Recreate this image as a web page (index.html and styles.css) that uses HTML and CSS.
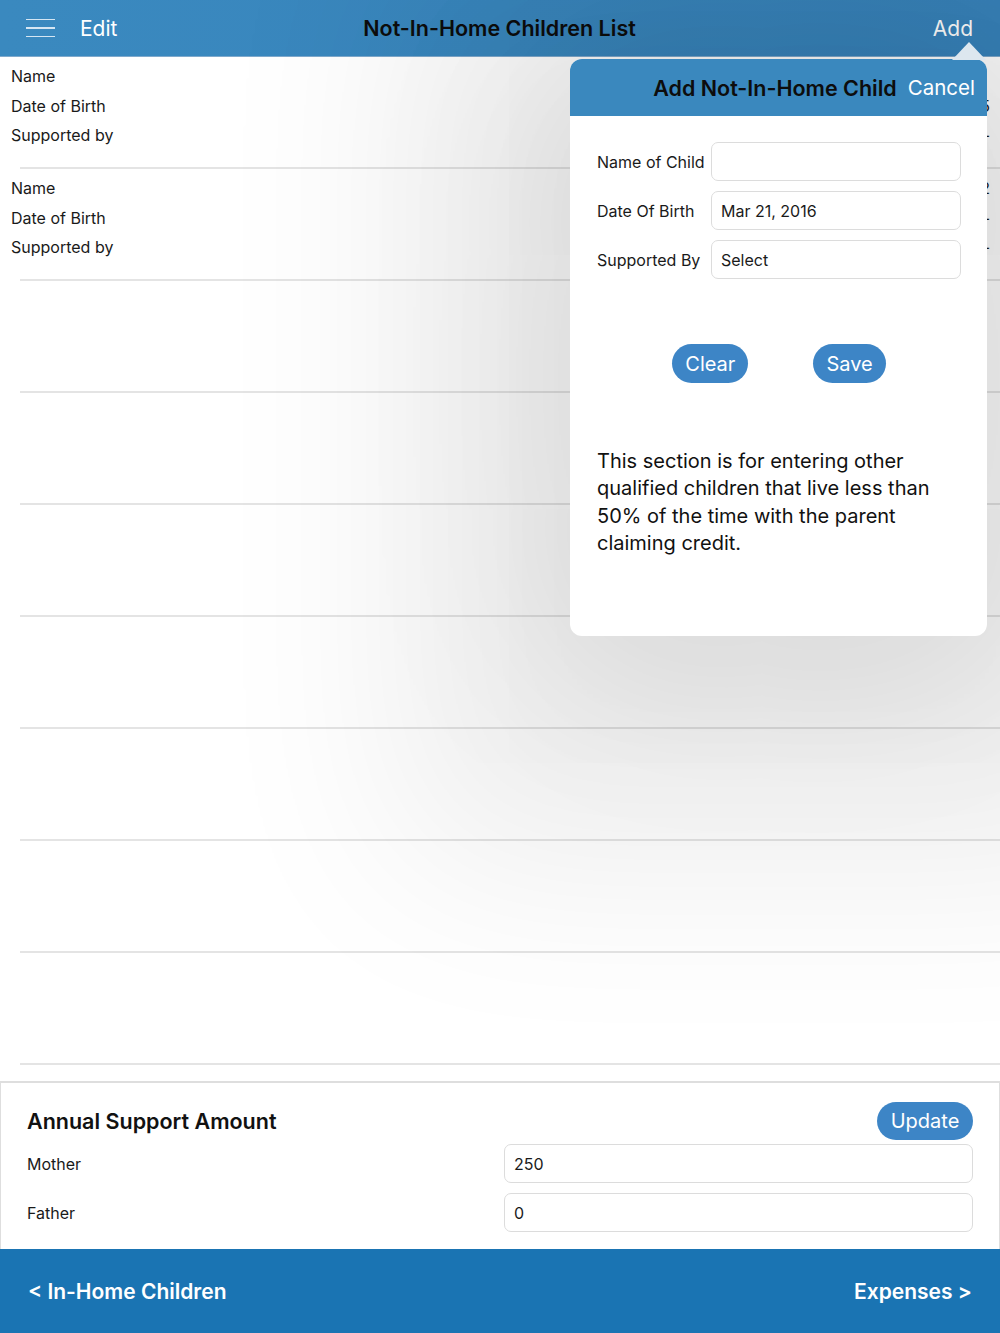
FILE: index.html
```
<!DOCTYPE html>
<html lang="en">

<head>
  <meta charset="UTF-8" />
  <meta name="viewport" content="width=device-width, initial-scale=1.0" />
  <title>Not-In-Home Children List</title>
  <link rel="stylesheet" href="styles.css">
</head>

<body>
  <div class="page">
    <!-- 顶部导航 -->
    <div class="nav">
      <div class="nav-side">
        <span class="menu"><i></i><i></i><i></i></span>
        <span class="nav-btn">Edit</span>
      </div>
      <div class="nav-title">Not-In-Home Children List</div>
      <div class="nav-side right">
        <span class="nav-btn">Add</span>
      </div>
    </div>

    <!-- 孩子列表 -->
    <ul class="list">
      <li class="row">
        <div class="labels">
          <span>Name</span>
          <span>Date of Birth</span>
          <span>Supported by</span>
        </div>
        <div class="values">
          <span>&nbsp;</span>
          <span>Jan 5, 2015</span>
          <span>-</span>
        </div>
      </li>
      <li class="row">
        <div class="labels">
          <span>Name</span>
          <span>Date of Birth</span>
          <span>Supported by</span>
        </div>
        <div class="values">
          <span>Child 2</span>
          <span>-</span>
          <span>-</span>
        </div>
      </li>
      <li class="row"></li>
      <li class="row"></li>
      <li class="row"></li>
      <li class="row"></li>
      <li class="row"></li>
      <li class="row"></li>
      <li class="row"></li>
    </ul>

    <!-- 年度抚养金额 -->
    <div class="support">
      <div class="support-head">
        <h2>Annual Support Amount</h2>
        <button class="pill">Update</button>
      </div>
      <label>Mother</label>
      <input class="box" type="text" value="250" />
      <label>Father</label>
      <input class="box" type="text" value="0" />
    </div>

    <!-- 底部翻页 -->
    <div class="footer">
      <span>&lt; In-Home Children</span>
      <span>Expenses &gt;</span>
    </div>
  </div>

  <!-- 弹出框 -->
  <div class="arrow"></div>
  <div class="popover">
    <div class="pop-head">
      <span class="pop-title">Add Not-In-Home Child</span>
      <span class="pop-cancel">Cancel</span>
    </div>
    <div class="pop-body">
      <div class="form">
        <label>Name of Child</label>
        <input class="box" type="text" value="" />
        <label>Date Of Birth</label>
        <input class="box" type="text" value="Mar 21, 2016" />
        <label>Supported By</label>
        <input class="box" type="text" value="Select" />
      </div>
      <div class="actions">
        <button class="pill">Clear</button>
        <button class="pill">Save</button>
      </div>
      <p class="note">This section is for entering other<br />qualified children that live less than<br />50% of the time with the parent<br />claiming credit.</p>
    </div>
  </div>
</body>

</html>
```

FILE: styles.css
```
* {
  margin: 0;
  padding: 0;
  box-sizing: border-box;
}

ul {
  list-style: none;
}

body {
  font-family: Inter, "Noto Sans", sans-serif;
  color: #1a1a1a;
  background: #fff;
}

.page {
  height: 1333px;
  display: flex;
  flex-direction: column;
}

/* 顶部导航 */
.nav {
  height: 57px;
  flex: none;
  display: flex;
  align-items: center;
  padding: 0 27px 0 26px;
  background: linear-gradient(90deg, #3a89bf, #3883bb);
  border-bottom: 1px solid #7fa9cc;
}

.nav-side {
  flex: 1;
  display: flex;
  align-items: center;
}

.nav-side.right {
  justify-content: flex-end;
}

.menu {
  display: flex;
  flex-direction: column;
  gap: 7px;
  width: 29px;
  margin-right: 25px;
}

.menu i {
  display: block;
  height: 1.5px;
  background: #d5e6f3;
}

.nav-btn {
  font-size: 21px;
  color: #fff;
}

.nav-title {
  font-size: 21.5px;
  font-weight: 600;
  color: #0d0d0d;
}

/* 列表 */
.list {
  flex: 1;
}

.row {
  height: 112px;
  display: flex;
  justify-content: space-between;
  padding: 5px 10px 0 11px;
  background: linear-gradient(#e4e4e4, #e4e4e4) no-repeat 20px 100% / calc(100% - 20px) 2px;
}

.labels,
.values {
  display: flex;
  flex-direction: column;
  font-size: 16px;
  line-height: 29.5px;
}

.values {
  align-items: flex-end;
}

/* 年度抚养 */
.support {
  flex: none;
  display: grid;
  grid-template-columns: 1fr 469px;
  align-items: center;
  row-gap: 10px;
  padding: 19px 26px 17px 26px;
  border: 1px solid #dedede;
  border-top-width: 2px;
  border-bottom: none;
}

.support-head {
  grid-column: 1 / 3;
  display: flex;
  justify-content: space-between;
  align-items: center;
  margin-bottom: -6px;
}

.support h2 {
  font-size: 21.5px;
  font-weight: 600;
  color: #111;
}

.support label {
  font-size: 16px;
}

.box {
  height: 39px;
  width: 100%;
  border: 1px solid #dcdcdc;
  border-radius: 7px;
  padding: 0 9px;
  font: 16px Inter, "Noto Sans", sans-serif;
  color: #1a1a1a;
  outline: none;
  background: #fff;
}

.pill {
  border: none;
  border-radius: 20px;
  background: #3d85c6;
  color: #fff;
  font: 20px Inter, "Noto Sans", sans-serif;
  height: 38px;
  padding: 0 13px;
}

.support .pill {
  width: 96px;
}

/* 底部 */
.footer {
  height: 84px;
  flex: none;
  display: flex;
  justify-content: space-between;
  align-items: center;
  padding: 0 28px;
  background: #1a74b3;
  color: #fff;
  font-size: 21px;
  font-weight: 600;
}

/* 弹出框 */
.popover {
  position: absolute;
  top: 59px;
  left: 570px;
  width: 417px;
  height: 577px;
  background: #fff;
  border-radius: 12px;
  box-shadow: 0 20px 200px 20px rgba(0, 0, 0, 0.1), 0 60px 200px 170px rgba(0, 0, 0, 0.075);
  overflow: hidden;
}

.arrow {
  position: absolute;
  top: 42px;
  left: 952px;
  width: 34px;
  height: 18px;
  background: #dde7ef;
  clip-path: polygon(50% 0, 100% 100%, 0 100%);
  z-index: 2;
}

.pop-head {
  height: 57px;
  display: flex;
  justify-content: flex-end;
  align-items: center;
  gap: 11px;
  padding-right: 12px;
  background: #3a88be;
}

.pop-title {
  font-size: 21.5px;
  font-weight: 600;
  color: #0d0d0d;
}

.pop-cancel {
  font-size: 20.5px;
  color: #fff;
}

.pop-body {
  padding: 26px 26px 0 27px;
}

.form {
  display: grid;
  grid-template-columns: 114px 250px;
  align-items: center;
  row-gap: 10px;
}

.form label {
  font-size: 16px;
}

.actions {
  display: flex;
  justify-content: center;
  gap: 65px;
  margin-top: 65px;
}

.actions .pill {
  height: 39px;
}

.note {
  margin-top: 65px;
  font-size: 20px;
  line-height: 27.4px;
  color: #111;
}
```
